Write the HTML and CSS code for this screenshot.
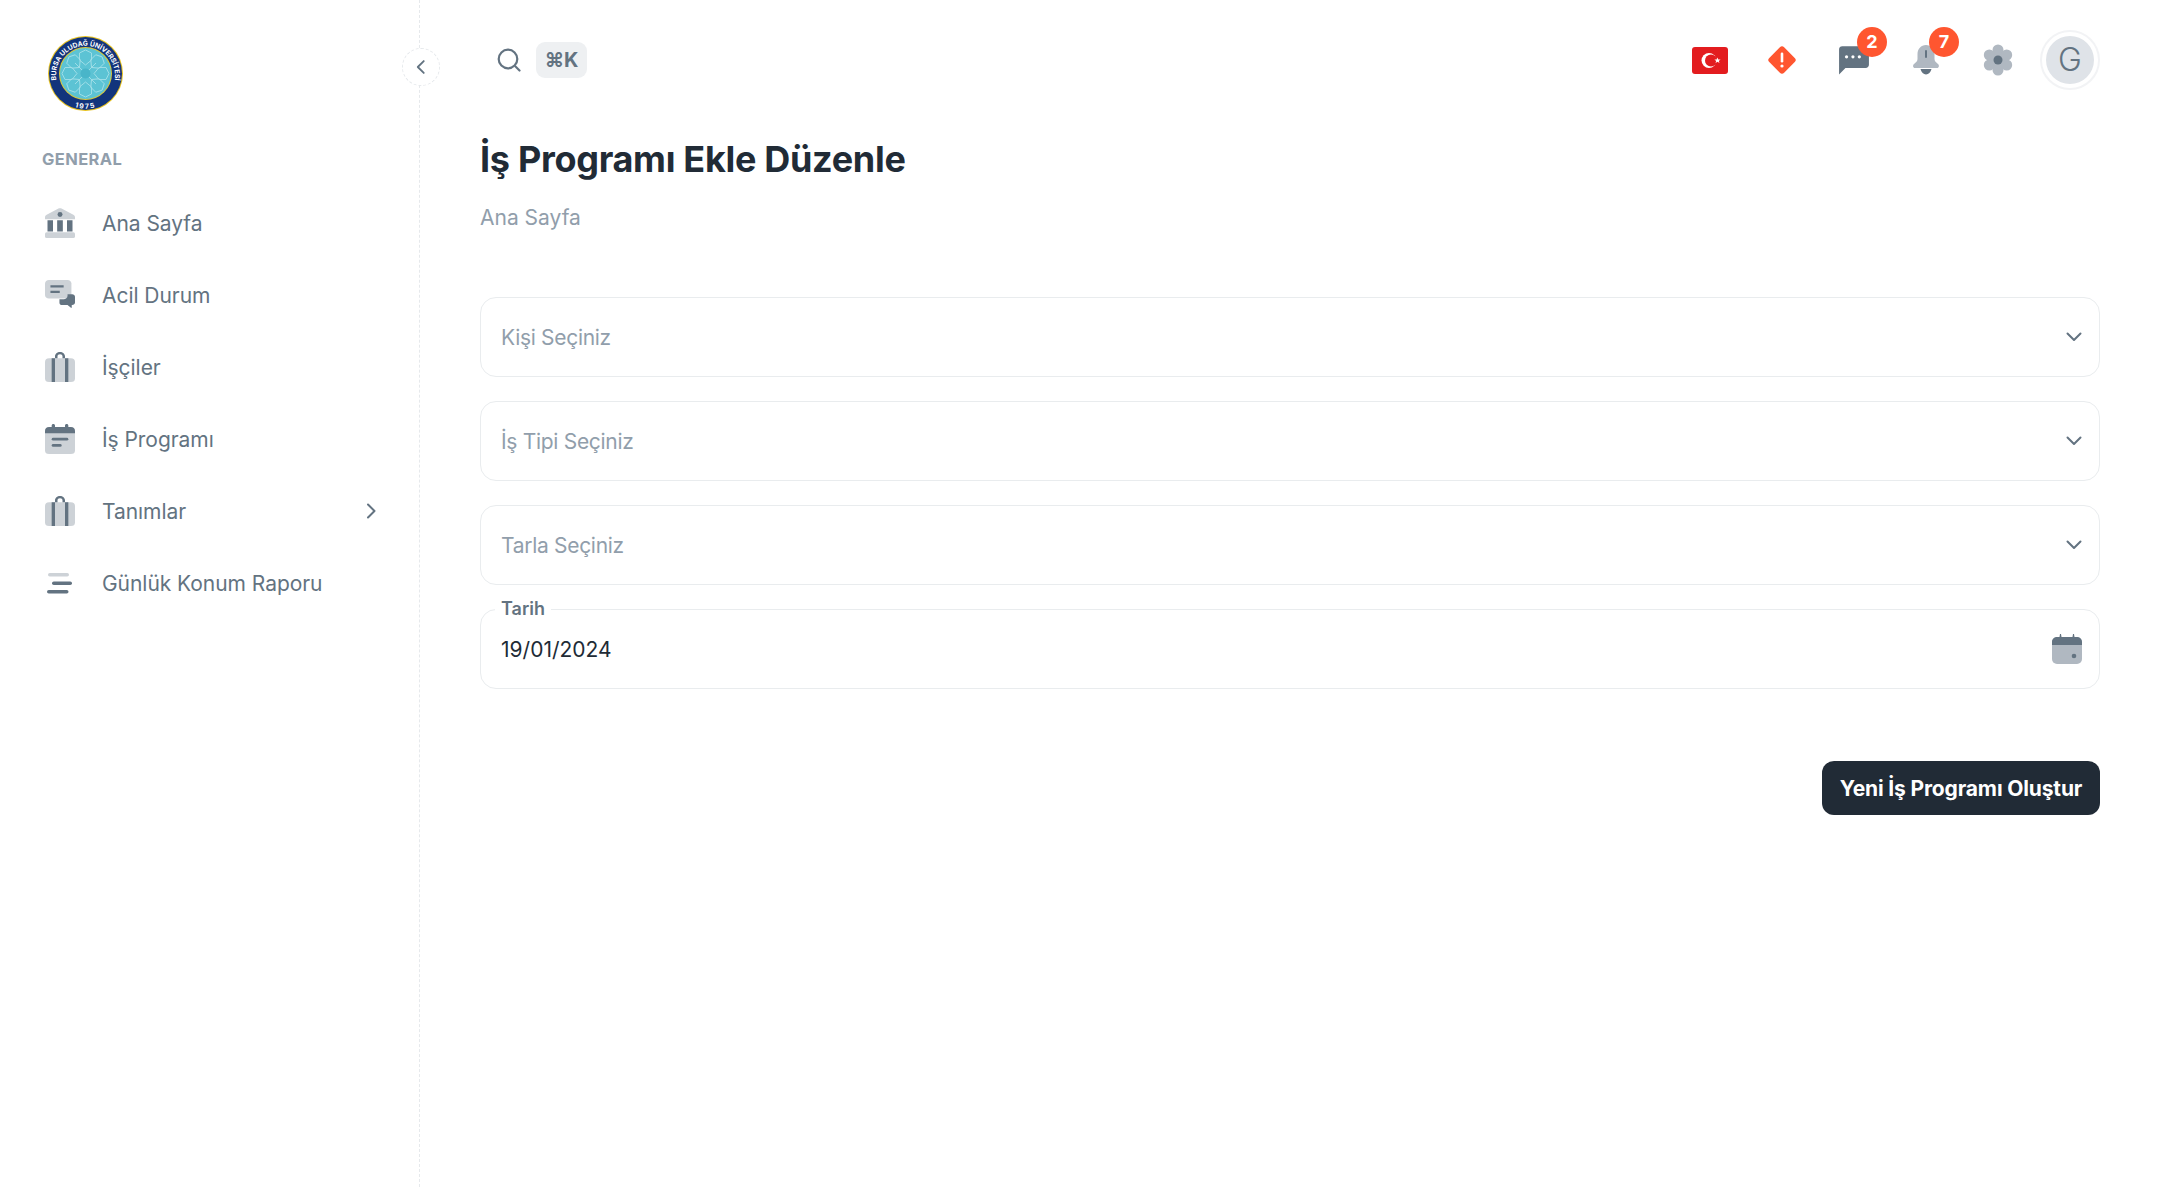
FILE: index.html
```html
<!DOCTYPE html>
<html lang="tr">
<head>
    <meta charset="UTF-8">
    <meta name="viewport" content="width=device-width, initial-scale=1.0">
    <title>İş Programı Ekle Düzenle</title>
    <link rel="stylesheet" href="styles.css">
</head>
<body>
<div class="app">
    <aside class="sidebar">
        <svg class="logo" viewBox="0 0 75 75">
            <circle cx="37.5" cy="37.5" r="37.5" fill="#e8c21e"/>
            <circle cx="37.5" cy="37.5" r="36.5" fill="#12347c"/>
            <circle cx="37.5" cy="37.5" r="26.5" fill="#d9c83c"/>
            <circle cx="37.5" cy="37.5" r="25.5" fill="#5cc3d4"/>
            <g fill="none" stroke="#a5e0e8" stroke-width="0.9">
                <path id="petal" d="M37.5 14l6 3v7l-6 5-6-5v-7z"/>
                <use href="#petal" transform="rotate(45 37.5 37.5)"/>
                <use href="#petal" transform="rotate(90 37.5 37.5)"/>
                <use href="#petal" transform="rotate(135 37.5 37.5)"/>
                <use href="#petal" transform="rotate(180 37.5 37.5)"/>
                <use href="#petal" transform="rotate(225 37.5 37.5)"/>
                <use href="#petal" transform="rotate(270 37.5 37.5)"/>
                <use href="#petal" transform="rotate(315 37.5 37.5)"/>
                <path d="M27 27l21 21M48 27L27 48"/>
            </g>
            <circle cx="37.5" cy="37.5" r="5" fill="#49b5c9"/>
            <path id="logoTop" d="M10 50A29.500 29.500 0 1 1 65 50" fill="none"/>
            <path id="logoBottom" d="M22.800 69.500A35 35 0 0 0 52.200 69.500" fill="none"/>
            <text class="logo-text"><textPath href="#logoTop" startOffset="50%" text-anchor="middle">BURSA ULUDAĞ ÜNİVERSİTESİ</textPath></text>
            <text class="logo-text logo-year"><textPath href="#logoBottom" startOffset="50%" text-anchor="middle">1975</textPath></text>
        </svg>

        <div class="nav-title">GENERAL</div>

        <nav class="nav">
            <a class="nav-item">
                <svg class="nav-icon" viewBox="3 3 18 18.500" preserveAspectRatio="none">
                    <path class="soft" d="M3 8.600c0-.7.4-1.200 1-1.500l6.800-3.700c.8-.4 1.600-.4 2.400 0L20 7.100c.6.300 1 .8 1 1.500V10H3z"/>
                    <circle class="solid" cx="12" cy="7" r="1.500"/>
                    <path class="solid" d="M4.500 10.500h3.300v7H4.500zM10.300 10.500h3.400v7h-3.400zM16.200 10.500h3.300v7h-3.300z"/>
                    <rect class="soft" x="3" y="18" width="18" height="3.500" rx="1"/>
                </svg>
                <span>Ana Sayfa</span>
            </a>
            <a class="nav-item">
                <svg class="nav-icon" viewBox="2.500 2.500 19.300 21" preserveAspectRatio="none">
                    <path class="soft" d="M5 2.500h12c1.400 0 2.500 1.100 2.500 2.500v8c0 1.400-1.100 2.500-2.500 2.500H5c-1.400 0-2.500-1.100-2.500-2.500V5c0-1.400 1.100-2.500 2.500-2.500z"/>
                    <path class="solid" d="M6 6.200h8.500v1.600H6zM6 10h6v1.600H6z"/>
                    <path class="solid" d="M17 12.500h3c1 0 1.800.8 1.800 1.800v4c0 1-.8 1.700-1.800 1.700h-.3v1.800c0 .3-.3.400-.5.200l-2.200-2h-3.500c-1 0-1.700-.6-1.700-1.600V16h2.700c1.300 0 2.500-1.100 2.500-2.500z"/>
                </svg>
                <span>Acil Durum</span>
            </a>
            <a class="nav-item">
                <svg class="nav-icon" viewBox="3 2 18 19.500" preserveAspectRatio="none">
                    <rect class="soft" x="3" y="6" width="18" height="15.500" rx="2.500"/>
                    <path class="solid" d="M9 6V4.800C9 3.300 10.300 2 12 2s3 1.300 3 2.800V6h-1.500V4.800c0-.7-.6-1.300-1.500-1.300s-1.500.6-1.500 1.300V6z"/>
                    <path class="solid" d="M7 6h2v15.500H7zM15 6h2v15.500h-2z"/>
                </svg>
                <span>İşçiler</span>
            </a>
            <a class="nav-item">
                <svg class="nav-icon" viewBox="3 2 18 19.500" preserveAspectRatio="none">
                    <rect class="soft" x="3" y="4" width="18" height="17.500" rx="2.500"/>
                    <path class="solid" d="M3 8V6.500C3 5.100 4.100 4 5.500 4H7V3c0-.6.400-1 1-1s1 .4 1 1v1h6V3c0-.6.400-1 1-1s1 .4 1 1v1h1.500C19.900 4 21 5.100 21 6.500V8z"/>
                    <rect class="solid" x="7" y="11" width="10" height="1.800" rx=".9"/>
                    <rect class="solid" x="7" y="15" width="6" height="1.800" rx=".9"/>
                </svg>
                <span>İş Programı</span>
            </a>
            <a class="nav-item">
                <svg class="nav-icon" viewBox="3 2 18 19.500" preserveAspectRatio="none">
                    <rect class="soft" x="3" y="6" width="18" height="15.500" rx="2.500"/>
                    <path class="solid" d="M9 6V4.800C9 3.300 10.300 2 12 2s3 1.300 3 2.800V6h-1.500V4.800c0-.7-.6-1.300-1.500-1.300s-1.500.6-1.500 1.300V6z"/>
                    <path class="solid" d="M7 6h2v15.500H7zM15 6h2v15.500h-2z"/>
                </svg>
                <span>Tanımlar</span>
                <svg class="nav-arrow" viewBox="0 0 24 24"><path d="M9 5.500l6.500 6.500L9 18.500"/></svg>
            </a>
            <a class="nav-item">
                <svg class="nav-icon" viewBox="0 0 30 30">
                    <rect class="soft" x="3" y="5" width="21" height="3.500" rx="1.750"/>
                    <rect class="solid" x="7" y="13.500" width="20" height="3.500" rx="1.750"/>
                    <rect class="solid" x="2" y="22" width="21.500" height="3.500" rx="1.750"/>
                </svg>
                <span>Günlük Konum Raporu</span>
            </a>
        </nav>

        <button class="collapse-btn">
            <svg viewBox="0 0 24 24"><path d="M15 5.500L8.500 12l6.500 6.500"/></svg>
        </button>
    </aside>

    <main class="main">
        <header class="topbar">
            <div class="search">
                <svg class="search-icon" viewBox="0 0 24 24"><circle cx="11" cy="11" r="9.300"/><path d="M18.500 18.500L22.500 22.500"/></svg>
                <span class="kbd">⌘K</span>
            </div>
            <div class="top-actions">
                <div class="top-btn">
                    <svg class="flag" viewBox="0 0 36 27">
                        <rect width="36" height="27" rx="3" fill="#e31c1f"/>
                        <circle cx="17" cy="13.500" r="7.500" fill="#fff"/>
                        <circle cx="19" cy="13.500" r="6" fill="#e31c1f"/>
                        <path d="M25.500 10.500l.8 2.100 2.300 0-1.800 1.300.7 2.200-2-1.300-2 1.300.7-2.200-1.800-1.300 2.300 0z" fill="#fff"/>
                    </svg>
                </div>
                <div class="top-btn">
                    <svg class="top-icon" viewBox="0 0 32 32">
                        <rect x="5.500" y="5.500" width="21" height="21" rx="3" transform="rotate(45 16 16)" fill="#ff5630"/>
                        <rect x="14.700" y="8.500" width="2.600" height="10" rx="1.300" fill="#fff"/>
                        <circle cx="16" cy="22" r="1.600" fill="#fff"/>
                    </svg>
                </div>
                <div class="top-btn">
                    <svg class="top-icon" viewBox="3 2.500 30 30">
                        <path d="M4 31V7.500C4 5.600 5.300 4.500 7 4.500h22c1.700 0 3 1.200 3 3V22c0 1.700-1.300 3-3 3H10z" fill="#637381"/>
                        <circle cx="11" cy="14.500" r="1.500" fill="#fff"/>
                        <circle cx="17" cy="14.500" r="1.500" fill="#fff"/>
                        <circle cx="23" cy="14.500" r="1.500" fill="#fff"/>
                    </svg>
                    <span class="badge">2</span>
                </div>
                <div class="top-btn">
                    <svg class="top-icon" viewBox="0 0 32 32">
                        <path d="M16 1c5 0 8.500 4 8.500 9v5c0 2 1.500 3.500 3.500 5 1.500 1.200 1.200 4-1 4H5c-2.200 0-2.500-2.800-1-4 2-1.500 3.500-3 3.500-5v-5c0-5 3.500-9 8.500-9z" fill="#b0b8c1"/>
                        <path d="M10.500 25h11c-.8 3.300-3 5.500-5.500 5.500s-4.700-2.200-5.500-5.500z" fill="#637381"/>
                        <rect x="15" y="6" width="2" height="8" rx="1" fill="#637381"/>
                    </svg>
                    <span class="badge">7</span>
                </div>
                <div class="top-btn">
                    <svg class="top-icon" viewBox="0 0 32 32">
                        <g fill="#b0b8c1">
                            <circle cx="16" cy="16" r="9.500"/>
                            <circle cx="16" cy="6" r="5.500"/>
                            <circle cx="16" cy="26" r="5.500"/>
                            <circle cx="7.300" cy="11" r="5.500"/>
                            <circle cx="24.700" cy="11" r="5.500"/>
                            <circle cx="7.300" cy="21" r="5.500"/>
                            <circle cx="24.700" cy="21" r="5.500"/>
                        </g>
                        <circle cx="16" cy="16" r="4.500" fill="#637381"/>
                    </svg>
                </div>
                <div class="avatar-ring"><div class="avatar">G</div></div>
            </div>
        </header>

        <div class="content">
            <h1 class="page-title">İş Programı Ekle Düzenle</h1>
            <div class="breadcrumb">Ana Sayfa</div>

            <form class="form">
                <div class="field">
                    <span class="placeholder">Kişi Seçiniz</span>
                    <svg class="chevron" viewBox="0 0 24 24"><path d="M5.500 8.500l6.500 6.500 6.500-6.500"/></svg>
                </div>
                <div class="field">
                    <span class="placeholder">İş Tipi Seçiniz</span>
                    <svg class="chevron" viewBox="0 0 24 24"><path d="M5.500 8.500l6.500 6.500 6.500-6.500"/></svg>
                </div>
                <div class="field">
                    <span class="placeholder">Tarla Seçiniz</span>
                    <svg class="chevron" viewBox="0 0 24 24"><path d="M5.500 8.500l6.500 6.500 6.500-6.500"/></svg>
                </div>
                <div class="field">
                    <label class="field-label">Tarih</label>
                    <span class="value">19/01/2024</span>
                    <svg class="calendar" viewBox="0 0 30 30">
                        <rect y="3" width="30" height="27" rx="5" fill="#b0b8c1"/>
                        <path d="M0 11V8c0-2.800 2.200-5 5-5h2.500l.5-3h1l.5 3h11l.5-3h1l.5 3H25c2.800 0 5 2.200 5 5v3z" fill="#637381"/>
                        <circle cx="22" cy="22" r="2.300" fill="#637381"/>
                    </svg>
                </div>
                <div class="form-actions">
                    <button type="button" class="btn-primary">Yeni İş Programı Oluştur</button>
                </div>
            </form>
        </div>
    </main>
</div>
</body>
</html>
```

FILE: styles.css
```css
* {
    box-sizing: border-box;
}
body {
    margin: 0;
    font-family: Inter, "Liberation Sans", sans-serif;
    color: #212b36;
    background: #fff;
}
.app {
    display: flex;
    min-height: 1187px;
}

/* sidebar */
.sidebar {
    position: relative;
    flex: 0 0 420px;
    padding-top: 36px;
    border-right: 1px dashed #e6e9ec;
}
.logo {
    display: block;
    width: 75px;
    height: 75px;
    margin-left: 48px;
}
.logo-text {
    font-size: 6.800px;
    font-weight: 700;
    fill: #fff;
}
.logo-year {
    font-size: 7px;
    letter-spacing: 1.500px;
}
.nav-title {
    margin: 37px 0 0 42px;
    font-size: 16.500px;
    line-height: 22px;
    font-weight: 700;
    letter-spacing: .4px;
    color: #919eab;
}
.nav {
    margin-top: 17px;
}
.nav-item {
    display: flex;
    align-items: center;
    height: 72px;
    padding-left: 45px;
    font-size: 21px;
    letter-spacing: -.05px;
    color: #637381;
}
.nav-icon {
    width: 30px;
    height: 30px;
    margin-right: 27px;
    flex: none;
}
.soft {
    fill: #cdd2d7;
}
.solid {
    fill: #637381;
}
.nav-arrow {
    width: 24px;
    height: 24px;
    margin-left: auto;
    margin-right: 36px;
    fill: none;
    stroke: #637381;
    stroke-width: 2;
    stroke-linecap: round;
    stroke-linejoin: round;
}
.collapse-btn {
    position: absolute;
    top: 48px;
    right: -21px;
    width: 38px;
    height: 38px;
    padding: 7px;
    border: 1px dashed #e6e9ec;
    border-radius: 50%;
    background: #fff;
}
.collapse-btn svg {
    display: block;
    width: 22px;
    height: 22px;
    fill: none;
    stroke: #637381;
    stroke-width: 2;
    stroke-linecap: round;
    stroke-linejoin: round;
}

/* main area */
.main {
    flex: 1;
    padding: 0 60px;
    min-width: 0;
}
.topbar {
    display: flex;
    align-items: center;
    justify-content: space-between;
    height: 120px;
}
.search {
    display: flex;
    align-items: center;
    gap: 15px;
    padding-left: 17px;
}
.search-icon {
    width: 24px;
    height: 24px;
    fill: none;
    stroke: #637381;
    stroke-width: 2.200;
    stroke-linecap: round;
}
.kbd {
    display: flex;
    align-items: center;
    justify-content: center;
    width: 51px;
    height: 36px;
    border-radius: 9px;
    background: #eef0f2;
    color: #637381;
    font-size: 20px;
    font-weight: 700;
}
.top-actions {
    display: flex;
    align-items: center;
    gap: 12px;
}
.top-btn {
    position: relative;
    display: flex;
    align-items: center;
    justify-content: center;
    width: 60px;
    height: 60px;
}
.flag {
    width: 36px;
    height: 27px;
}
.top-icon {
    width: 32px;
    height: 32px;
}
.badge {
    position: absolute;
    top: -3px;
    right: -3px;
    width: 30px;
    height: 30px;
    border-radius: 50%;
    background: #ff5630;
    color: #fff;
    font-size: 18px;
    font-weight: 700;
    line-height: 30px;
    text-align: center;
}
.avatar-ring {
    width: 60px;
    height: 60px;
    padding: 4px;
    border: 2px solid #f2f3f5;
    border-radius: 50%;
}
.avatar {
    width: 48px;
    height: 48px;
    border-radius: 50%;
    background: #dfe3e8;
    color: #637381;
    font-size: 32px;
    font-weight: 300;
    line-height: 48px;
    text-align: center;
}

/* page */
.content {
    padding-top: 12px;
}
.page-title {
    margin: 0;
    font-size: 36px;
    line-height: 54px;
    font-weight: 700;
    letter-spacing: -.3px;
    color: #212b36;
}
.breadcrumb {
    margin-top: 16px;
    font-size: 21px;
    line-height: 32px;
    color: #919eab;
}
.form {
    display: flex;
    flex-direction: column;
    gap: 24px;
    margin-top: 63px;
}
.field {
    position: relative;
    display: flex;
    align-items: center;
    justify-content: space-between;
    height: 80px;
    padding: 0 20px;
    border: 1px solid #e9ecee;
    border-radius: 16px;
    font-size: 21px;
}
.placeholder {
    color: #919eab;
    letter-spacing: -.3px;
}
.value {
    color: #212b36;
}
.chevron {
    width: 24px;
    height: 24px;
    margin-right: -7px;
    fill: none;
    stroke: #637381;
    stroke-width: 2;
    stroke-linecap: round;
    stroke-linejoin: round;
}
.calendar {
    width: 30px;
    height: 30px;
    margin-right: -3px;
}
.field-label {
    position: absolute;
    top: -11px;
    left: 14px;
    padding: 0 6px;
    background: #fff;
    color: #637381;
    font-size: 18px;
    font-weight: 600;
    line-height: 20px;
}
.form-actions {
    display: flex;
    justify-content: flex-end;
    margin-top: 48px;
}
.btn-primary {
    width: 278px;
    height: 54px;
    border: none;
    border-radius: 12px;
    background: #212b36;
    color: #fff;
    font-family: inherit;
    font-size: 21px;
    font-weight: 700;
    letter-spacing: -.15px;
}
```
